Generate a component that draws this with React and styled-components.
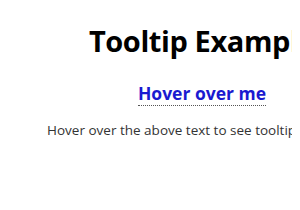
import styled, { createGlobalStyle } from 'styled-components';

const Global = createGlobalStyle`
  body {
    margin: 8px;
    background: #fff;
    font-family: "Open Sans", "Noto Sans", sans-serif;
    overflow: hidden;
  }
`;

const Page = styled.div`
  width: 388px;
  text-align: center;
  padding-top: 13px;
`;

const Title = styled.h1`
  margin: 0 0 20px;
  font-size: 29px;
  font-weight: 700;
  color: #000;
  line-height: 40px;
  letter-spacing: -0.4px;
`;

const Trigger = styled.span`
  display: inline-block;
  position: relative;
  font-size: 17.5px;
  font-weight: 700;
  color: #1a1ad0;
  line-height: 24px;
  border-bottom: 1px dotted #555;
  cursor: help;
`;

const Hint = styled.p`
  margin: 15px -40px 0;
  font-size: 13.5px;
  color: #333;
  white-space: nowrap;
`;

const App = () => {
  return (
    <>
      <Global />
      <Page>
        <Title>Tooltip Example</Title>
        <Trigger>Hover over me</Trigger>
        <Hint>Hover over the above text to see tooltip in action.</Hint>
      </Page>
    </>
  );
};

export default App;
